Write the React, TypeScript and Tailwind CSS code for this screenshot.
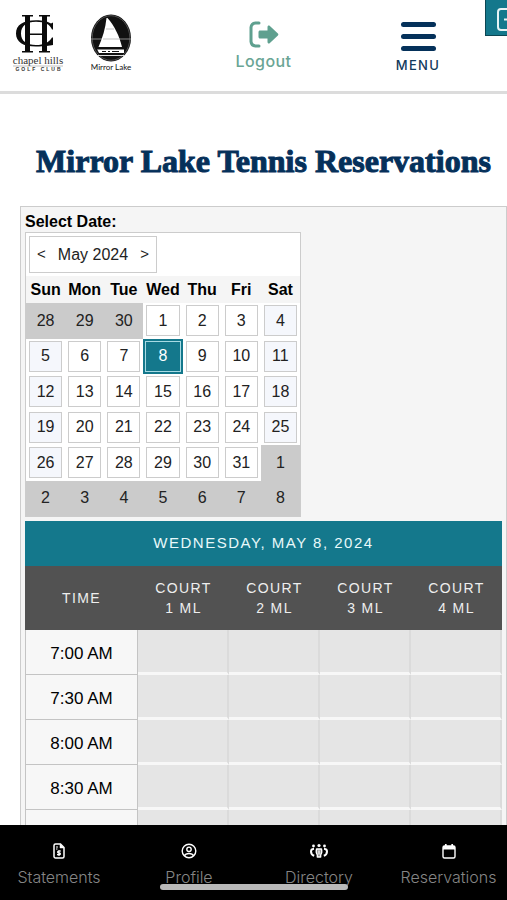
import React from "react";

const weekdays = ["Sun", "Mon", "Tue", "Wed", "Thu", "Fri", "Sat"];

const weeks: number[][] = [
  [28, 29, 30, 1, 2, 3, 4],
  [5, 6, 7, 8, 9, 10, 11],
  [12, 13, 14, 15, 16, 17, 18],
  [19, 20, 21, 22, 23, 24, 25],
  [26, 27, 28, 29, 30, 31, 1],
  [2, 3, 4, 5, 6, 7, 8],
];

const courts = ["1 ML", "2 ML", "3 ML", "4 ML"];
const times = ["7:00 AM", "7:30 AM", "8:00 AM", "8:30 AM", ""];

function ClubLogo() {
  return (
    <svg width="52" height="58" viewBox="0 0 52 58" role="img" aria-label="Chapel Hills Golf Club">
      <g fill="#0b0b0b">
        <rect x="13" y="2" width="5" height="36" />
        <rect x="30" y="2" width="5" height="36" />
        <rect x="10" y="1" width="11" height="1.500" />
        <rect x="27" y="1" width="11" height="1.500" />
        <rect x="10" y="37" width="11" height="1.500" />
        <rect x="27" y="37" width="11" height="1.500" />
        <rect x="17" y="19.500" width="14" height="1.500" />
      </g>
      <path
        d="M41 8.500v7h-1C38 10.500 33 7.800 24 7.800 14.500 7.800 9 12 9 19.500S14.500 31 24 31c8 0 13-2.500 16-7.500h1v7.500c-4 .5-8 1.500-17 1.500C11 32.500 4 28 4 19.500S11 6.300 24 6.300c7 0 11 1.200 15 3.200z"
        fill="#0b0b0b"
      />
      <text x="26" y="50" textAnchor="middle" fontFamily="Liberation Serif, serif" fontSize="11" fill="#333">
        chapel hills
      </text>
      <path d="M1 52h50" stroke="#999" strokeWidth=".6" />
      <text
        x="27"
        y="57"
        textAnchor="middle"
        fontFamily="Liberation Sans, sans-serif"
        fontSize="5"
        fontWeight="bold"
        letterSpacing="2"
        fill="#333"
      >
        GOLF CLUB
      </text>
    </svg>
  );
}

function MirrorLakeLogo() {
  return (
    <svg width="46" height="58" viewBox="0 0 46 58" role="img" aria-label="Mirror Lake">
      <ellipse cx="23" cy="24" rx="20" ry="23.500" fill="#111" />
      <ellipse cx="23" cy="24" rx="18.800" ry="22.300" fill="none" stroke="#777" strokeWidth=".6" />
      <path d="M3 25h40" stroke="#888" strokeWidth="1" />
      <path d="M18.500 4l1 0c7 8 12 18 14.500 29H10.500c4-9 7-19 8-29z" fill="#fff" />
      <path d="M18 15h8M15 25h17" stroke="#aaa" strokeWidth=".7" />
      <path d="M9 35h27v4H11z" fill="#fff" />
      <path d="M9 35h27" stroke="#111" strokeWidth="1" />
      <path d="M14 37.500h4M20 37.500h2M24 37.500h7" stroke="#111" strokeWidth="1.200" />
      <path d="M9 41.500h27" stroke="#ddd" strokeWidth="1" />
      <text x="23" y="56" textAnchor="middle" fontFamily="Lato, sans-serif" fontSize="8" fill="#111">
        Mirror Lake
      </text>
    </svg>
  );
}

function LogoutIcon() {
  return (
    <svg width="30" height="27" viewBox="0 0 30 27" aria-hidden="true">
      <path d="M10 2H6.500A5 5 0 0 0 2 6.500v14A5 5 0 0 0 6.500 25H10" fill="none" stroke="#5fa08f" strokeWidth="3" strokeLinecap="round" />
      <path
        d="M11 9.500h7.500V6c0-1.400 1.300-2 2.400-1l8 7.500c.6.600.6 1.400 0 2l-8 7.500c-1.100 1-2.400.4-2.400-1v-3.500H11c-.8 0-1.500-.7-1.500-1.500v-5c0-.8.700-1.500 1.500-1.500z"
        fill="#5fa08f"
      />
    </svg>
  );
}

function StatementIcon() {
  return (
    <svg width="16" height="16" viewBox="0 0 16 16" fill="none" stroke="#fff" aria-hidden="true">
      <path d="M4.500 1h5L13 4.500v9c0 .8-.7 1.500-1.500 1.500h-7c-.8 0-1.500-.7-1.500-1.500v-11C3 1.700 3.700 1 4.500 1z" strokeWidth="1.500" />
      <path d="M9 1v4h4z" fill="#fff" strokeWidth=".5" />
      <path d="M5 4h2M5 6h1.500" strokeWidth="1" />
      <path d="M10 8H7.500c-1.200 0-1.200 1.800 0 1.800h1c1.200 0 1.200 1.900 0 1.900H6M8 7v6" strokeWidth="1.200" />
    </svg>
  );
}

function ProfileIcon() {
  return (
    <svg width="16" height="16" viewBox="0 0 16 16" fill="none" stroke="#fff" strokeWidth="1.400" aria-hidden="true">
      <circle cx="8" cy="8" r="6.800" />
      <circle cx="8" cy="6.300" r="2.200" />
      <path d="M3.300 12.800C4.300 11 6 10.500 8 10.500s3.700.5 4.700 2.300" />
    </svg>
  );
}

function DirectoryIcon() {
  return (
    <svg width="20" height="16" viewBox="0 0 20 16" fill="none" stroke="#fff" aria-hidden="true">
      <g fill="#fff" stroke="none">
        <circle cx="4.500" cy="3" r="1.400" />
        <circle cx="10" cy="2.500" r="1.600" />
        <circle cx="15.500" cy="3" r="1.400" />
      </g>
      <path d="M5 5.800C3 6 2 7 2 8.500S3 12 5.200 12.800M15 5.800c2 .2 3 1.200 3 2.700S17 12 14.800 12.800" strokeWidth="2" />
      <path d="M7.500 6h5c.6 2.500.3 4.500-.8 5.800V14H8.300v-2.200C7.200 10.500 6.900 8.500 7.500 6z" fill="#999" strokeWidth="1.300" strokeLinejoin="round" />
      <path d="M10 7.500v4" strokeWidth="1.200" />
    </svg>
  );
}

function CalendarIcon() {
  return (
    <svg width="16" height="16" viewBox="0 0 16 16" aria-hidden="true">
      <rect x="2" y="3" width="12" height="12" rx="1.500" fill="none" stroke="#fff" strokeWidth="1.400" />
      <path d="M2 3h12v3.500H2z" fill="#fff" />
      <path d="M4.800 1v3M11.200 1v3" stroke="#fff" strokeWidth="1.700" />
    </svg>
  );
}

function DayCell({ week, index, day }: { week: number; index: number; day: number }) {
  const outside = (week === 0 && day > 20) || (week >= 4 && day < 10);
  const selected = week === 1 && day === 8;
  const weekend = index === 0 || index === 6;
  if (outside) {
    return (
      <td className="bg-[#cbcbcb] px-0 py-0.5">
        <button type="button" className="block h-[31px] w-full text-[#222]">{day}</button>
      </td>
    );
  }
  if (selected) {
    return (
      <td className="bg-[#14788c] p-0.5">
        <button type="button" aria-pressed="true" className="block h-[31px] w-full border border-[#a8dbe4] text-white">
          {day}
        </button>
      </td>
    );
  }
  return (
    <td className="px-[3px] py-0.5">
      <button
        type="button"
        className={
          weekend
            ? "block h-[31px] w-full border border-[#ccc] bg-[#f5f7fc] text-[#222]"
            : "block h-[31px] w-full border border-[#ccc] bg-white text-[#222]"
        }
      >
        {day}
      </button>
    </td>
  );
}

export default function App() {
  return (
    <div className="relative flex h-screen flex-col overflow-hidden bg-white font-['Liberation_Sans',Arial,sans-serif] text-base text-black">
      <header className="relative grid h-[94px] shrink-0 grid-cols-[186fr_155fr_166fr] border-b-[3px] border-[#dcdcdc]">
        <div className="flex items-start gap-6 pt-3.5 pl-3">
          <ClubLogo />
          <MirrorLakeLogo />
        </div>
        <a href="#logout" className="flex flex-col items-center pt-[21px] font-['Inter',sans-serif] text-base leading-5 font-medium tracking-wide text-[#6aa595]">
          <LogoutIcon />
          <span className="mt-[3px]">Logout</span>
        </a>
        <button type="button" className="flex flex-col items-center pt-[22px] pr-3 font-['Inter',sans-serif] text-[13px] leading-4 font-medium tracking-widest text-[#123a5c]">
          <span className="flex flex-col gap-[7px]">
            <span className="h-[5px] w-[35px] rounded-full bg-[#05315a]" />
            <span className="h-[5px] w-[35px] rounded-full bg-[#05315a]" />
            <span className="h-[5px] w-[35px] rounded-full bg-[#05315a]" />
          </span>
          <span className="mt-1.5">MENU</span>
        </button>
        <button type="button" aria-label="Share" className="absolute top-0 right-0 h-9 w-[22px] overflow-hidden border-b border-l border-[#0c4653] bg-[#14788c]">
          <svg width="22" height="36" viewBox="0 0 22 36" fill="none" stroke="#e6f4f6" strokeWidth="2" aria-hidden="true">
            <rect x="12" y="9" width="20" height="21" rx="3" />
            <path d="M18 19.500h8" />
          </svg>
        </button>
      </header>

      <main className="min-h-0 flex-1 overflow-hidden pl-5">
        <h1 className="mt-[47px] mb-[25px] text-center font-['Liberation_Serif',serif] text-[32px] leading-10 font-bold whitespace-nowrap text-[#05305a] [-webkit-text-stroke:1px_#05305a]">
          Mirror Lake Tennis Reservations
        </h1>

        <div className="border border-[#ccc] bg-[#f5f5f5] p-1">
          <h2 className="h-[21px] leading-[22px] font-bold">Select Date:</h2>

          <section aria-label="Calendar" className="w-[276px] border border-[#ccc] bg-white">
            <div className="p-[3px]">
              <div className="flex h-[37px] w-32 items-center justify-between border border-[#ccc] px-[7px] text-[#222]">
                <button type="button" aria-label="Previous month" className="text-[15px]">&lt;</button>
                <span>May 2024</span>
                <button type="button" aria-label="Next month" className="text-[15px]">&gt;</button>
              </div>
            </div>
            <table className="h-[240px] w-full table-fixed border-collapse text-center">
              <thead>
                <tr className="h-[27px] bg-[#f5f5f5]">
                  {weekdays.map((d) => (
                    <th key={d} scope="col" className="p-0 font-bold">{d}</th>
                  ))}
                </tr>
              </thead>
              <tbody>
                {weeks.map((week, w) => (
                  <tr key={w}>
                    {week.map((day, i) => (
                      <DayCell key={i} week={w} index={i} day={day} />
                    ))}
                  </tr>
                ))}
              </tbody>
            </table>
          </section>

          <table className="mt-1 w-full table-fixed border-separate border-spacing-0 text-center">
            <colgroup>
              <col className="w-[113px]" />
              <col />
              <col />
              <col />
              <col />
            </colgroup>
            <thead>
              <tr className="h-[45px] bg-[#14788c]">
                <th colSpan={5} className="p-0 text-[15px] font-normal tracking-widest text-[#e8f8fa]">
                  WEDNESDAY, MAY 8, 2024
                </th>
              </tr>
              <tr className="h-16 bg-[#525252] text-sm leading-5 tracking-widest text-[#eee]">
                <th scope="col" className="p-0 font-normal">TIME</th>
                {courts.map((c) => (
                  <th key={c} scope="col" className="p-0 font-normal">
                    COURT
                    <br />
                    {c}
                  </th>
                ))}
              </tr>
            </thead>
            <tbody>
              {times.map((t, row) => (
                <tr key={row} className="h-[45px]">
                  <th scope="row" className="border border-t-0 border-[#c4c4c4] bg-[#f7f7f7] px-0 pt-[3px] pb-0 text-[17px] font-normal">
                    {t}
                  </th>
                  {courts.map((c) => (
                    <td key={c} className="border-r-2 border-b-[3px] border-r-[#dbdbdb] border-b-[#f7f7f7] bg-[#e5e5e5] p-0" />
                  ))}
                </tr>
              ))}
            </tbody>
          </table>
        </div>
      </main>

      <nav aria-label="Main" className="grid h-[75px] shrink-0 grid-cols-[118fr_142fr_118fr_129fr] bg-black font-['Inter',sans-serif] text-base leading-5 font-light text-[#858585]">
        <a href="#statements" className="flex flex-col items-center gap-2 pt-[18px]">
          <StatementIcon />
          Statements
        </a>
        <a href="#profile" className="flex flex-col items-center gap-2 pt-[18px]">
          <ProfileIcon />
          Profile
        </a>
        <a href="#directory" className="flex flex-col items-center gap-2 pt-[18px]">
          <DirectoryIcon />
          Directory
        </a>
        <a href="#reservations" className="flex flex-col items-center gap-2 pt-[18px] pl-3">
          <CalendarIcon />
          Reservations
        </a>
      </nav>
      <div className="absolute bottom-2.5 left-1/2 h-1.5 w-[188px] -translate-x-1/2 rounded-full bg-[#b9b9b9]" />
    </div>
  );
}
